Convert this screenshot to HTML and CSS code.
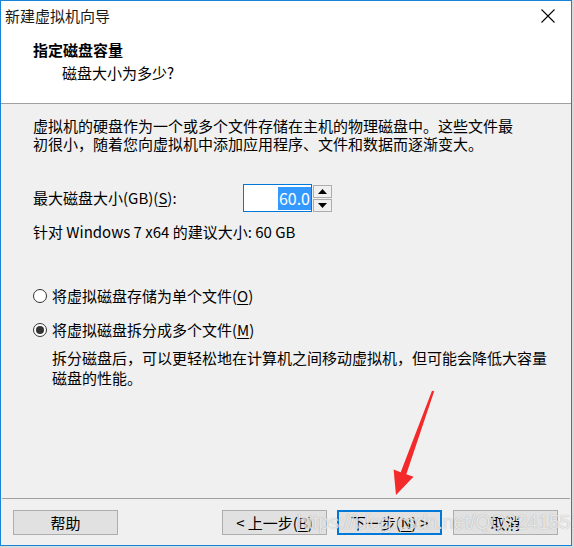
FILE: index.html
```html
<!DOCTYPE html>
<html lang="zh-CN">
<head>
<meta charset="utf-8">
<title>新建虚拟机向导</title>
<link rel="stylesheet" href="styles.css">
</head>
<body>
<div class="window">
  <div class="titlebar">
    <span class="title">新建虚拟机向导</span>
    <svg class="close" width="14" height="14" viewBox="0 0 14 14"><path d="M0.5 0.5 L13.5 13.5 M13.5 0.5 L0.5 13.5" stroke="#000" stroke-width="1.1" fill="none"/></svg>
  </div>
  <div class="header">
    <div class="h-title">指定磁盘容量</div>
    <div class="h-sub">磁盘大小为多少?</div>
  </div>
  <div class="content">
    <p class="intro">虚拟机的硬盘作为一个或多个文件存储在主机的物理磁盘中。这些文件最<br>初很小，随着您向虚拟机中添加应用程序、文件和数据而逐渐变大。</p>
    <div class="size-row">
      <span class="label">最大磁盘大小(GB)(<u>S</u>):</span>
      <div class="spin">
        <div class="spin-input"><span class="sel">60.0</span></div>
        <div class="spin-btns">
          <div class="spin-btn"><svg width="9" height="5" viewBox="0 0 9 5"><path d="M0 5 L4.5 0 L9 5Z" fill="#000"/></svg></div>
          <div class="spin-btn"><svg width="9" height="5" viewBox="0 0 9 5"><path d="M0 0 L9 0 L4.5 5Z" fill="#000"/></svg></div>
        </div>
      </div>
    </div>
    <div class="rec">针对 Windows 7 x64 的建议大小: 60 GB</div>
    <div class="radio r1"><span class="dot"></span><span>将虚拟磁盘存储为单个文件(<u>O</u>)</span></div>
    <div class="radio r2"><span class="dot checked"></span><span>将虚拟磁盘拆分成多个文件(<u>M</u>)</span></div>
    <p class="desc">拆分磁盘后，可以更轻松地在计算机之间移动虚拟机，但可能会降低大容量<br>磁盘的性能。</p>
  </div>
  <div class="footer">
    <div class="btn help">帮助</div>
    <div class="nav">
      <div class="btn">&lt; 上一步(<u>B</u>)</div>
      <div class="btn focus">下一步(<u>N</u>) &gt;</div>
    </div>
    <div class="btn cancel">取消</div>
  </div>
  <svg class="arrow" width="572" height="546" viewBox="0 0 572 546"><polygon points="432,390.7 434.2,391.3 406.3,474.2 413.5,476.8 396,495 393.6,469.6 400.7,472.2" fill="#f42a2a"/></svg>
  <div class="watermark">https://blog.csdn.net/QQ32415515</div>
</div>
</body>
</html>
```

FILE: styles.css
```css
html, body {
  margin: 0;
  padding: 0;
}
body {
  width: 574px;
  height: 548px;
  background: #d9d9d9;
  font-family: "Noto Sans CJK SC", "Noto Sans", sans-serif;
  font-size: 15px;
  color: #000;
}
.window {
  position: relative;
  box-sizing: border-box;
  width: 572px;
  height: 546px;
  border: 1px solid #1883d7;
  background: #f0f0f0;
  display: flex;
  flex-direction: column;
}
.titlebar {
  height: 29px;
  background: #fff;
  display: flex;
  align-items: center;
  justify-content: space-between;
  padding: 0 16px 0 4px;
}
.title {
  font-size: 15px;
  color: #1a1a1a;
  line-height: 20px;
}
.close {
  display: block;
}
.header {
  background: #fff;
  border-bottom: 1px solid #a0a0a0;
  box-sizing: border-box;
  height: 74px;
  padding: 10px 0 0 32px;
}
.h-title {
  font-weight: bold;
  line-height: 20px;
}
.h-sub {
  line-height: 20px;
  margin: 3px 0 0 29px;
}
.content {
  flex: 1;
  padding: 13px 0 0 32px;
  line-height: 18px;
}
.intro {
  margin: 0;
  line-height: 18px;
}
.size-row {
  display: flex;
  align-items: center;
  margin-top: 31px;
  height: 28px;
}
.label {
  width: 210px;
}
.spin {
  display: flex;
  align-items: flex-start;
}
.spin-input {
  box-sizing: border-box;
  width: 69px;
  height: 28px;
  border: 1px solid #0078d7;
  background: #fff;
  display: flex;
  align-items: center;
  justify-content: flex-end;
  padding: 1px 0;
}
.sel {
  background: #3399ff;
  color: #fff;
  height: 23px;
  line-height: 23px;
  font-size: 16px;
  padding: 0 1px;
}
.spin-btns {
  display: flex;
  flex-direction: column;
  gap: 1px;
  margin-left: 1px;
  padding-top: 1px;
}
.spin-btn {
  box-sizing: border-box;
  width: 19px;
  height: 13px;
  border: 1px solid #adadad;
  background: #f0f0f0;
  display: flex;
  align-items: center;
  justify-content: center;
}
.spin-btn svg {
  display: block;
}
.rec {
  margin-top: 11px;
}
.radio {
  display: flex;
  align-items: center;
  gap: 5px;
  height: 18px;
}
.r1 {
  margin-top: 46px;
}
.r2 {
  margin-top: 16px;
}
.dot {
  box-sizing: border-box;
  width: 14px;
  height: 14px;
  border: 1px solid #333;
  border-radius: 50%;
  background: #fff;
  display: flex;
  align-items: center;
  justify-content: center;
}
.dot.checked::after {
  content: "";
  width: 8px;
  height: 8px;
  border-radius: 50%;
  background: #333;
}
.desc {
  margin: 9px 0 0 19px;
  line-height: 20px;
}
u {
  text-decoration: underline;
  text-underline-offset: 2px;
}
.footer {
  border-top: 1px solid #a0a0a0;
  margin: 0 1px;
  height: 47px;
  box-sizing: border-box;
  display: flex;
  align-items: flex-start;
  padding: 11px 10px 0 11px;
}
.btn {
  box-sizing: border-box;
  width: 105px;
  height: 25px;
  border: 1px solid #adadad;
  background: #e1e1e1;
  display: flex;
  align-items: center;
  justify-content: center;
  line-height: 20px;
}
.nav {
  display: flex;
  gap: 10px;
  margin-left: 104px;
}
.btn.focus {
  border: 2px solid #0078d7;
}
.cancel {
  margin-left: 11px;
}
.arrow {
  position: absolute;
  left: -1px;
  top: -1px;
  pointer-events: none;
}
.watermark {
  position: absolute;
  left: 296px;
  top: 509px;
  font-family: "Liberation Sans", Arial, sans-serif;
  font-size: 20px;
  line-height: 24px;
  color: rgba(255, 255, 255, 0.75);
  text-shadow: 0 0 1px rgba(0, 0, 0, 0.35);
  letter-spacing: -0.3px;
  pointer-events: none;
  white-space: nowrap;
}
```
